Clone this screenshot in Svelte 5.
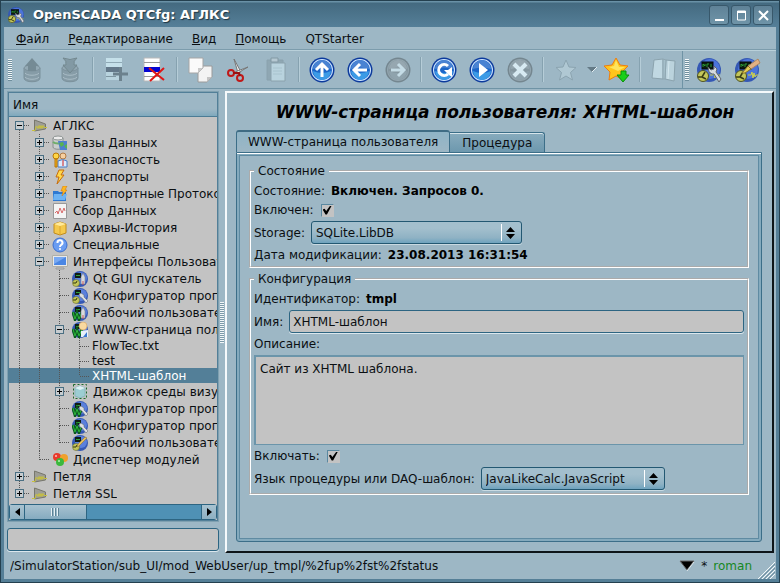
<script lang="ts">
	/**
	 * OpenSCADA configurator window -- station tree on the left,
	 * property page of the selected node on the right.
	 */

	interface TreeNode {
		depth: number;
		label: string;
		icon?: string;
		open?: boolean;
	}

	let nodes: TreeNode[] = $state([
		{ depth: 0, label: 'АГЛКС', icon: 'station', open: true },
		{ depth: 1, label: 'Базы Данных', icon: 'db', open: false },
		{ depth: 1, label: 'Безопасность', icon: 'security', open: false },
		{ depth: 1, label: 'Транспорты', icon: 'bolt', open: false },
		{ depth: 1, label: 'Транспортные Протоколы', icon: 'protocol', open: false },
		{ depth: 1, label: 'Сбор Данных', icon: 'daq', open: false },
		{ depth: 1, label: 'Архивы-История', icon: 'archive', open: false },
		{ depth: 1, label: 'Специальные', icon: 'special', open: false },
		{ depth: 1, label: 'Интерфейсы Пользователя', icon: 'ui', open: true },
		{ depth: 2, label: 'Qt GUI пускатель', icon: 'starter' },
		{ depth: 2, label: 'Конфигуратор программы', icon: 'qtcfg' },
		{ depth: 2, label: 'Рабочий пользователя', icon: 'webvision' },
		{ depth: 2, label: 'WWW-страница польз.', icon: 'webuser', open: true },
		{ depth: 3, label: 'FlowTec.txt' },
		{ depth: 3, label: 'test' },
		{ depth: 3, label: 'XHTML-шаблон' },
		{ depth: 2, label: 'Движок среды визуал.', icon: 'engine', open: false },
		{ depth: 2, label: 'Конфигуратор программы', icon: 'webcfg' },
		{ depth: 2, label: 'Конфигуратор программы', icon: 'webcfg' },
		{ depth: 2, label: 'Рабочий пользователя', icon: 'vision' },
		{ depth: 1, label: 'Диспетчер модулей', icon: 'modules' },
		{ depth: 0, label: 'Петля', icon: 'station', open: false },
		{ depth: 0, label: 'Петля SSL', icon: 'station', open: false }
	]);

	const menus = [
		['Ф', 'айл'],
		['Р', 'едактирование'],
		['В', 'ид'],
		['П', 'омощь'],
		['', 'QTStarter']
	];

	const tools = [
		{ icon: 'load', title: 'Загрузить', off: true },
		{ icon: 'save', title: 'Сохранить', off: true },
		{ icon: '|' },
		{ icon: 'add', title: 'Добавить', off: true },
		{ icon: 'del', title: 'Удалить' },
		{ icon: '|' },
		{ icon: 'copy', title: 'Копировать' },
		{ icon: 'cut', title: 'Вырезать' },
		{ icon: 'paste', title: 'Вставить', off: true },
		{ icon: '|' },
		{ icon: 'up', title: 'Вверх' },
		{ icon: 'back', title: 'Назад' },
		{ icon: 'forward', title: 'Вперёд', off: true },
		{ icon: '|' },
		{ icon: 'reload', title: 'Обновить' },
		{ icon: 'play', title: 'Запустить' },
		{ icon: 'stop', title: 'Остановить', off: true },
		{ icon: '|' },
		{ icon: 'star', title: 'Избранное', off: true },
		{ icon: 'drop', title: 'Список избранного', off: true },
		{ icon: 'staradd', title: 'Добавить в избранное' },
		{ icon: '|' },
		{ icon: 'book', title: 'Руководство', off: true }
	];

	let selected = $state(15);
	let enabled = $state(true);
	let toEnable = $state(true);
	let name = $state('XHTML-шаблон');
	let description = $state('Сайт из XHTML шаблона.');

	// is there one more sibling at this depth below row i
	function continues(i: number, depth: number): boolean {
		for (let j = i + 1; j < nodes.length; j++) {
			if (nodes[j].depth < depth) return false;
			if (nodes[j].depth === depth) return true;
		}
		return false;
	}

	let rows = $derived.by(() => {
		const res: { node: TreeNode; guides: boolean[]; index: number }[] = [];
		let hidden = Infinity;
		nodes.forEach((node, index) => {
			if (node.depth > hidden) return;
			hidden = node.open === false ? node.depth : Infinity;
			const guides: boolean[] = [];
			for (let d = 0; d <= node.depth; d++) guides.push(continues(index, d));
			res.push({ node, guides, index });
		});
		return res;
	});
</script>

{#snippet globe()}
	<circle cx="12" cy="12" r="12" fill="#3558b4" />
	<circle cx="13" cy="11" r="10" fill="#4c74da" />
	<path d="M13 17h3l1-3 1 6 1-5 1 4 1-2h2" stroke="#d0d24a" fill="none" />
	<circle cx="6" cy="18" r="5.500" fill="#c3c65a" stroke="#4d5222" />
	<path d="M1 19h4l3-5M5 19l4 2" stroke="#3a3d14" stroke-width="1.500" fill="none" />
{/snippet}

{#snippet screen()}
	<rect x="5" y="4" width="11" height="7" fill="#0c1c10" stroke="#05080a" />
	<path d="M6 9V6l2 2V6M10 9V6h2M14 6v3" stroke="#2b9a36" fill="none" />
{/snippet}

{#snippet wrench()}
	<path d="M11 9l1 5 3 2 2 0 5 8 2-3-5-7 1-3-3-3v3l-3 1z" fill="#d6dade" stroke="#60666e" />
{/snippet}

{#snippet brush()}
	<path d="M23 1l2 4-9 6-3-3z" fill="#e3b184" stroke="#b08660" />
	<path d="M13 8l3 3-6 4-3 0z" fill="#e3cc58" stroke="#8a7426" />
{/snippet}

{#snippet ball(off: boolean)}
	<circle cx="12" cy="12" r="12.500" fill={off ? '#74868f' : '#0c3a9c'} />
	<circle cx="12" cy="12" r="11" fill={off ? '#93a6b0' : '#cfe6ff'} />
	<circle cx="12" cy="12" r="10" fill={off ? '#84969f' : '#1c66c8'} />
	<path d="M3 13a9 9 0 0 0 18 0q-9 4-18 0z" fill={off ? '#8fa3ad' : '#3c9be6'} />
	<path d="M3 11a9 9 0 0 1 18 0q-9-3-18 0z" fill={off ? '#96a7b0' : '#4a83d2'} />
{/snippet}

{#snippet toolIcon(icon: string)}
	<svg width="24" height="24" viewBox="0 0 24 24" overflow="visible" aria-hidden="true">
		{#if icon === 'load' || icon === 'save'}
			<path d="M4 10v10c0 5 16 5 16 0V10z" fill="#869ca7" stroke="#7b919c" />
			<ellipse cx="12" cy="10" rx="8" ry="3" fill="#93a9b4" stroke="#7d929d" />
			<path d="M5 15c2 3 12 3 14 0M5 19c2 3 12 3 14 0" stroke="#a9bcc6" fill="none" />
			{#if icon === 'load'}
				<path d="M12 0l7 8h-3v5H8V8H5z" fill="#758b95" />
			{:else}
				<path d="M5 0q4 3 3 7H5l7 8 7-8h-3q-1-4 3-7-7 3-14 0z" fill="#8299a4" stroke="#73888f" />
			{/if}
		{:else if icon === 'add'}
			<path d="M2 0h16v10H2z" fill="#c5e0ea" />
			<path d="M2 4.500h16" stroke="#8fa9b5" />
			<path d="M2 9h16v5H2z" fill="#64798a" />
			<path d="M2 14h16v8H2z" fill="#b8d3de" />
			<path d="M2 18.500h10" stroke="#7f97a2" />
			<path d="M16.500 9v14M9 16h15" stroke="#6c818d" stroke-width="3" />
		{:else if icon === 'del'}
			<path d="M2 0h16v23H2z" fill="#fff" stroke="#b8b8b8" />
			<path d="M2 4.500h16M2 18.500h16" stroke="#999" />
			<path d="M2 9h16v5H2z" fill="#0505d2" />
			<path d="M7 10l15 12M22 10L8 23" stroke="#e01515" stroke-width="2" />
		{:else if icon === 'copy'}
			<path d="M10 8h14v11l-5 5h-9z" fill="#f3f3f3" stroke="#9a9a9a" />
			<path d="M19 24v-5h5z" fill="#c4c4c4" />
			<path d="M1 0h14v10l-5 5H1z" fill="#fafafa" stroke="#a5a5a5" />
			<path d="M10 15v-5h5z" fill="#c9c9c9" />
		{:else if icon === 'cut'}
			<path d="M8 1l7 13-3 1z" fill="#eee" stroke="#777" />
			<path d="M22 9L10 16l-1-2z" fill="#fff" stroke="#777" />
			<circle cx="5" cy="15" r="3" fill="none" stroke="#c01818" stroke-width="2" />
			<circle cx="14" cy="20" r="3" fill="none" stroke="#c01818" stroke-width="2" />
			<path d="M7 15l6 0 1 3" stroke="#9c1010" stroke-width="2" fill="none" />
		{:else if icon === 'paste'}
			<path d="M3 2h16v20H3z" fill="#8fa7b3" stroke="#8aa2ae" />
			<path d="M7 0h7v4H7z" fill="#b5c8d2" stroke="#8299a4" />
			<path d="M7 5h14v18H7z" fill="#b9d3de" stroke="#8ba2ad" />
			<path d="M9 10h9M9 13h9M9 16h9" stroke="#a8c3ce" />
		{:else if icon === 'up'}
			{@render ball(false)}
			<path d="M12 19V7M6 12l6-6 6 6" stroke="#fff" stroke-width="3" fill="none" />
		{:else if icon === 'back'}
			{@render ball(false)}
			<path d="M19 12H7M12 6l-6 6 6 6" stroke="#fff" stroke-width="3" fill="none" />
		{:else if icon === 'forward'}
			{@render ball(true)}
			<path d="M5 12h12M12 6l6 6-6 6" stroke="#c5dce6" stroke-width="3" fill="none" />
		{:else if icon === 'reload'}
			{@render ball(false)}
			<path d="M16 8a5.500 5.500 0 1 0 0 8" stroke="#fff" stroke-width="3" fill="none" />
			<path d="M12 12h4l4-3v10l-3-2z" fill="#fff" />
		{:else if icon === 'play'}
			{@render ball(false)}
			<path d="M9 5l9 7-9 7z" fill="#fff" />
		{:else if icon === 'stop'}
			{@render ball(true)}
			<path d="M6 6l12 12M18 6L6 18" stroke="#d7eaf2" stroke-width="4" />
		{:else if icon === 'star'}
			<path
				d="M12 2l3 7 7 .5-5.500 5 2 7.500-6.500-4-6.500 4 2-7.500L2 9.500 9 9z"
				fill="#b0c8d3" stroke="#8ba4b0" stroke-linejoin="round"
			/>
		{:else if icon === 'staradd'}
			<path
				d="M11 0l4 7 8 1-6 6 2 8-8-4-7 4 1-8-6-6 8-1z"
				fill="#ffc51c" stroke="#ed7d10" stroke-linejoin="round"
			/>
			<path d="M11 2l3 7 6 0-7 4-9-4 5-1z" fill="#ffe45e" />
			<path d="M16 13h5v4h3l-6 7-6-7h4z" fill="#19cf19" stroke="#0a8f0a" />
		{:else if icon === 'book'}
			<path d="M3 2l9-1v20l-11-1z" fill="#c0d8e2" stroke="#8ba3ae" />
			<path d="M15 2l9 1-1 20-9-2z" fill="#bbd3dd" stroke="#8ba3ae" />
			<path d="M12 1l3 1-1 19h-2z" fill="#a5bfca" stroke="#8fa7b2" />
			<path d="M18 3l-1 18" stroke="#d5e8ef" />
		{:else if icon === 'qtcfg'}
			{@render globe()}
			{@render screen()}
			{@render wrench()}
		{:else if icon === 'vision'}
			{@render globe()}
			{@render screen()}
			{@render brush()}
		{/if}
	</svg>
{/snippet}

{#snippet treeIcon(icon: string)}
	<svg width="16" height="16" viewBox="0 0 16 16" aria-hidden="true">
		{#if icon === 'station'}
			<path d="M2.500 2l11 4v5l-11 2z" fill="#9d9d95" stroke="#77776c" />
			<path d="M0 12.500h3l1-4h1l1 2 1-3 1 3 1-3 1 3 1-3 1 2h3" stroke="#c9c23c" fill="none" />
		{:else if icon === 'db'}
			<path d="M1 3v9c0 3 10 3 10 0V3z" fill="#c9cdcc" stroke="#898f8e" />
			<ellipse cx="6" cy="3" rx="5" ry="2" fill="#ececec" stroke="#8f9594" />
			<path d="M1 7c2 2 8 2 10 0" stroke="#6fae6a" stroke-width="2" fill="none" />
			<path d="M6 6h9v9H8z" fill="#4d7fd0" />
			<path d="M7 8l4-1 1 3-3 2zM12 11l3-2v5z" fill="#57b34f" />
		{:else if icon === 'security'}
			<circle cx="11" cy="4" r="3" fill="#f5cfa0" stroke="#b07a45" />
			<path d="M6 15V9q5-3 9 0v6z" fill="#dceafc" stroke="#4a7cc4" />
			<path d="M11 8v6" stroke="#d02020" />
			<circle cx="4" cy="4" r="3" fill="#ffd648" stroke="#bb7a08" />
			<path d="M3 7h2v8H3z" fill="#f4b51e" stroke="#b97505" />
		{:else if icon === 'bolt'}
			<path d="M7 1h5L9 6h3L5 15l2-7H4z" fill="#ffd84a" stroke="#c76c0c" />
		{:else if icon === 'protocol'}
			<path d="M1 5h5l1 1h7v9H1z" fill="#2e79d2" />
			<path d="M2 8h13l-2 6H1z" fill="#6cb3f4" />
			<path d="M11 0h4l-2 4h2l-5 6 1-5H9z" fill="#ffb81e" stroke="#c9700e" stroke-width=".5" />
		{:else if icon === 'daq'}
			<path d="M1.500 .5h13v15h-13z" fill="#f4f4f4" stroke="#999" />
			<path d="M3 10l2-2 1 3 2-6 2 5 2-5 1 3" stroke="#d86a6a" fill="none" />
		{:else if icon === 'archive'}
			<path d="M2 4l6-2 6 2v9l-6 2-6-2z" fill="#f5c94c" stroke="#c18c1c" />
			<path d="M2 4l6 2 6-2-6-2z" fill="#ffe999" />
			<path d="M8 6v9" stroke="#dba42c" />
		{:else if icon === 'special'}
			<circle cx="8" cy="8" r="7" fill="#6a9df2" stroke="#3a6ed0" />
			<path d="M5.500 6a2.500 2.500 0 1 1 3.500 2q-1 .6-1 2" stroke="#fff" stroke-width="2" fill="none" />
			<circle cx="8" cy="12" r="1" fill="#fff" />
		{:else if icon === 'ui'}
			<path d="M.5 1.500h15v11H.5z" fill="#e9e9e9" stroke="#b0b0a8" />
			<path d="M2 3h12v8H2z" fill="#4a86e4" />
			<path d="M2 3h12L2 10z" fill="#78a9f2" />
			<path d="M4 14h8v1H4z" fill="#eee" stroke="#999" />
		{:else if icon === 'engine'}
			<path d="M3 4l5-2 5 2v8l-5 2-5-2z" fill="#9ccdd2" stroke="#8ab8bd" />
			<path d="M3 4l5 2 5-2-5-2z" fill="#dff2f4" />
			<rect x="1.500" y=".5" width="13" height="14" fill="none" stroke="#1c6a2c" stroke-dasharray="2 2" />
		{:else if icon === 'modules'}
			<circle cx="5" cy="5" r="4" fill="#e83a2c" />
			<circle cx="12" cy="6" r="4" fill="#f0a02c" />
			<circle cx="8" cy="10" r="4" fill="#3cb83c" />
			<circle cx="7" cy="9" r="1" fill="#b6f2b0" />
			<circle cx="4" cy="4" r="1" fill="#ffc0b8" />
		{:else}
			<circle cx="8" cy="8" r="8" fill="#3558b4" />
			<circle cx="9" cy="7" r="6" fill="#5b80dc" />
			<rect x="3" y="2" width="6" height="5" fill="#101c14" />
			<path d="M4 4.500h4" stroke="#2fa23a" />
			{#if icon.startsWith('web')}
				<path d="M1 7l2 7 2-6 2 6 3-7" stroke="#0c5a1c" stroke-width="3" fill="none" />
				<path d="M1 7l2 7 2-6 2 6 3-7" stroke="#2bb33c" fill="none" />
			{:else}
				<circle cx="4" cy="12" r="3.500" fill="#c3c65a" stroke="#565a20" stroke-width=".5" />
				<path d="M1 12h3l1-2" stroke="#33360f" fill="none" />
			{/if}
			{#if icon === 'starter' || icon === 'webvision'}
				<path d="M11 2l2 4v7h-4V6z" fill="#d8dade" stroke="#70757c" stroke-width=".5" />
				<path d="M11 10v4" stroke="#cc5c5c" />
			{:else if icon === 'webuser'}
				<circle cx="11" cy="4" r="4" fill="#f9d9a0" stroke="#d29b50" stroke-width=".5" />
				<path d="M9 15V9l7-1v7z" fill="#e8f0fa" />
				<path d="M11 15l4-5v5z" fill="#3a78d0" />
			{:else if icon === 'vision'}
				<path d="M15 3l-8 8-2 1 1-3 7-7z" fill="#e6c05c" stroke="#8b6a28" stroke-width=".5" />
			{:else}
				<path d="M7 6l1 3 2 1 4 5 2-2-4-4V7L9 5z" fill="#dcdfe2" stroke="#5c6168" stroke-width=".5" />
			{/if}
		{/if}
	</svg>
{/snippet}

<div class="window">
	<header class="titlebar">
		<svg width="16" height="16" viewBox="0 0 24 24" overflow="visible" aria-hidden="true">
			{@render globe()}
			{@render screen()}
			{@render wrench()}
		</svg>
		<h1>OpenSCADA QTCfg: АГЛКС</h1>
		<button class="wm" aria-label="Свернуть">
			<svg width="11" height="11"><path d="M1 10h9" stroke="#fff" stroke-width="2" /></svg>
		</button>
		<button class="wm" aria-label="Развернуть">
			<svg width="11" height="11">
				<path d="M1.500 1v9h8V1z" stroke="#fff" fill="none" />
				<path d="M1 2h9" stroke="#fff" stroke-width="2" />
			</svg>
		</button>
		<button class="wm" aria-label="Закрыть">
			<svg width="11" height="11"><path d="M1 1l9 9M10 1l-9 9" stroke="#fff" stroke-width="2" /></svg>
		</button>
	</header>

	<nav class="menubar">
		{#each menus as [key, rest]}
			<button>{#if key}<u>{key}</u>{/if}{rest}</button>
		{/each}
	</nav>

	<div class="toolbars">
		<div class="toolbar">
			<span class="grip"></span>
			{#each tools as tool}
				{#if tool.icon === '|'}
					<span class="sep"></span>
				{:else if tool.icon === 'drop'}
					<button class="drop" aria-label={tool.title} disabled>
						<svg width="10" height="7"><path d="M0 1h10L5 6z" fill="#647a86" /><path d="M5 6l5-5" stroke="#e5eef2" /></svg>
					</button>
				{:else}
					<button aria-label={tool.title} disabled={tool.off}>{@render toolIcon(tool.icon)}</button>
				{/if}
			{/each}
		</div>
		<div class="toolbar start-tools">
			<span class="grip"></span>
			<button aria-label="Конфигуратор">{@render toolIcon('qtcfg')}</button>
			<button aria-label="Среда визуализации">{@render toolIcon('vision')}</button>
		</div>
	</div>

	<div class="body">
		<aside class="side">
			<div class="tree-frame">
				<div class="tree-head">Имя</div>
				<ul class="tree" role="tree">
					{#each rows as { node, guides, index } (index)}
						<li
							class="row"
							class:leaf={!node.icon}
							class:selected={selected === index}
							role="treeitem"
							aria-selected={selected === index}
							aria-expanded={node.open}
						>
							{#each guides as more, d}
								<svg class="guide" aria-hidden="true">
									{#if d < node.depth}
										{#if more}<line x1="10.5" y1="0" x2="10.5" y2="100%" />{/if}
									{:else}
										{#if index > 0}<line x1="10.5" y1="0" x2="10.5" y2="50%" />{/if}
										{#if more}<line x1="10.5" y1="50%" x2="10.5" y2="100%" />{/if}
										<line x1="11" y1="8.5" x2="20" y2="8.5" />
										{#if node.open !== undefined}
											<rect x="6.5" y="4.5" width="8" height="8" />
											<path class="sign" d={node.open ? 'M8 8.500h5' : 'M8 8.500h5M10.500 6v5'} />
										{/if}
									{/if}
								</svg>
							{/each}
							<button
								class="node"
								onclick={() => (selected = index)}
								ondblclick={() => { if (node.open !== undefined) node.open = !node.open; }}
							>
								{#if node.icon}{@render treeIcon(node.icon)}{/if}
								<span>{node.label}</span>
							</button>
						</li>
					{/each}
				</ul>
				<div class="scrollbar">
					<button aria-label="Влево"><svg width="5" height="8"><path d="M5 0v8L0 4z" /></svg></button>
					<div class="track">
						<div class="thumb"><i></i><i></i><i></i></div>
					</div>
					<button aria-label="Вправо"><svg width="5" height="8"><path d="M0 0v8l5-4z" /></svg></button>
				</div>
			</div>
			<input class="filter" type="text" aria-label="Поиск" />
		</aside>

		<div class="splitter"><span></span></div>

		<main class="page">
			<h2>WWW-страница пользователя: XHTML-шаблон</h2>
			<div class="tabs" role="tablist">
				<button class="tab active" role="tab" aria-selected="true">WWW-страница пользователя</button>
				<button class="tab" role="tab" aria-selected="false">Процедура</button>
			</div>
			<div class="panel" role="tabpanel">
				<fieldset>
					<legend>Состояние</legend>
					<div class="field">Состояние: <b>Включен. Запросов 0.</b></div>
					<div class="field">
						<label for="enabled">Включен:</label>
						<input id="enabled" type="checkbox" bind:checked={enabled} />
					</div>
					<div class="field">
						<label for="storage">Storage:</label>
						<span class="combo storage">
							<select id="storage"><option>SQLite.LibDB</option></select>
							<svg width="9" height="12"><path d="M0 5h9L4.500 0zM0 7h9l-4.500 5z" /></svg>
						</span>
					</div>
					<div class="field">Дата модификации: <b>23.08.2013 16:31:54</b></div>
				</fieldset>

				<fieldset>
					<legend>Конфигурация</legend>
					<div class="field">Идентификатор: <b>tmpl</b></div>
					<div class="field">
						<label for="name">Имя:</label>
						<input id="name" type="text" bind:value={name} />
					</div>
					<div class="field"><label for="descr">Описание:</label></div>
					<textarea id="descr" bind:value={description}></textarea>
					<div class="field">
						<label for="toenable">Включать:</label>
						<input id="toenable" type="checkbox" bind:checked={toEnable} />
					</div>
					<div class="field">
						<label for="lang">Язык процедуры или DAQ-шаблон:</label>
						<span class="combo lang">
							<select id="lang"><option>JavaLikeCalc.JavaScript</option></select>
							<svg width="9" height="12"><path d="M0 5h9L4.500 0zM0 7h9l-4.500 5z" /></svg>
						</span>
					</div>
				</fieldset>
			</div>
		</main>
	</div>

	<footer class="statusbar">
		<span class="path">/SimulatorStation/sub_UI/mod_WebUser/up_tmpl/%2fup%2fst%2fstatus</span>
		<svg width="16" height="12"><path d="M1 1h14L8 10z" stroke="#666" /><path d="M8 11l7-9" stroke="#dde6ea" /></svg>
		<span>*</span>
		<span class="user">roman</span>
		<svg class="corner" width="18" height="17">
			<path d="M0 17L17 0M4 17L17 4M8 17l9-9M12 17l5-5" stroke="#f4f9fb" />
			<path d="M2 17L17 2M6 17L17 6M10 17l7-7" stroke="#6d8fa1" />
		</svg>
	</footer>
</div>

<style>
	.window {
		--bg: #9db7c5;
		--edge: #527f98;
		--dark: #2d6582;
		--base: #c3c3c3;
		box-sizing: border-box;
		min-height: 100vh;
		display: flex;
		flex-direction: column;
		background: var(--bg);
		border: 1px solid #24404f;
		box-shadow: inset 0 0 0 3px #557f97;
		padding: 0 3px 3px;
		font: 12px/16px 'DejaVu Sans', sans-serif;
		color: #0b0f12;
	}

	button,
	input,
	select,
	textarea {
		font: inherit;
		color: inherit;
		box-sizing: border-box;
		margin: 0;
	}

	button {
		border: 0;
		padding: 0;
		background: none;
	}

	svg {
		display: block;
		flex: none;
	}

	/* Title bar */
	.titlebar {
		display: flex;
		align-items: center;
		gap: 2px;
		height: 26px;
		box-sizing: border-box;
		margin: 0 -3px;
		padding: 2px 6px 0 7px;
		background: linear-gradient(#6991a6 0, #6991a6 1px, #446a80 2px, #557f98 100%);
	}

	.titlebar h1 {
		flex: 1;
		margin: 0 0 0 7px;
		font-size: 13px;
		color: #fff;
		text-shadow: 1px 1px 1px #1d3340;
	}

	.wm {
		display: grid;
		place-items: center;
		width: 20px;
		height: 20px;
		border: 1px solid #38586b;
		border-radius: 3px;
		background: linear-gradient(#5f8297, #6f94a8);
	}

	/* Menu */
	.menubar {
		display: flex;
		gap: 19px;
		height: 23px;
		padding: 2px 12px 0;
		box-sizing: border-box;
		border-bottom: 1px solid #7c9cac;
	}

	.toolbars {
		display: flex;
		height: 39px;
		box-sizing: border-box;
		border-top: 1px solid #b9d0da;
		border-bottom: 1px solid #6f93a5;
	}

	.toolbar {
		display: flex;
		align-items: center;
		padding-left: 4px;
	}

	.start-tools {
		flex: 1;
		padding-left: 2px;
		border-left: 1px solid #6f93a5;
	}

	.toolbar button {
		display: grid;
		place-items: center;
		width: 38px;
		height: 36px;
	}

	.toolbar .drop {
		width: 13px;
	}

	.grip {
		width: 4px;
		height: 22px;
		margin-right: 1px;
		background: repeating-linear-gradient(#f2f7f9 0 1px, #6f8e9d 1px 2px);
	}

	.sep {
		width: 2px;
		height: 25px;
		margin: 0 3px;
		box-sizing: border-box;
		border-left: 1px solid #86a2b0;
		border-right: 1px solid #b6cdd8;
	}

	/* Station tree */
	.body {
		flex: 1;
		display: flex;
		padding: 2px 2px 0 3px;
	}

	.side {
		width: 212px;
		flex: none;
		display: flex;
		flex-direction: column;
		gap: 6px;
		padding-bottom: 2px;
		box-sizing: border-box;
	}

	.tree-frame {
		flex: 1;
		display: flex;
		flex-direction: column;
		border: 1px solid #7fa0b0;
		box-shadow: inset 0 0 0 1px var(--edge);
		padding: 1px;
		background: var(--base);
	}

	.tree-head {
		padding: 4px 4px 3px;
		border-bottom: 1px solid #4c7c95;
		background: linear-gradient(#9db7c5 70%, #7fa9bd);
	}

	.tree {
		flex: 1;
		margin: 0;
		padding: 0;
		list-style: none;
		overflow: hidden;
	}

	.row {
		display: flex;
		height: 17px;
	}

	.row.leaf {
		height: 15px;
	}

	.row.selected {
		background: #537f98;
		color: #fff;
	}

	.guide {
		width: 20px;
		height: 100%;
		shape-rendering: crispEdges;
	}

	.guide line {
		stroke: #555;
		stroke-dasharray: 1 1;
	}

	.guide rect {
		fill: #c8cdd0;
		stroke: #4b6f82;
	}

	.guide .sign {
		stroke: #000;
	}

	.node {
		flex: 1;
		min-width: 0;
		display: flex;
		align-items: center;
		gap: 5px;
		padding-left: 3px;
		overflow: hidden;
		text-align: left;
		white-space: nowrap;
	}

	.node span {
		min-width: 0;
		overflow: hidden;
	}

	.scrollbar {
		display: flex;
		height: 16px;
		box-sizing: border-box;
		border: 1px solid var(--dark);
		border-radius: 3px;
		background: #4f91b5;
	}

	.scrollbar button {
		display: grid;
		place-items: center;
		width: 14px;
		background: linear-gradient(#a8c2d0, #8db0c2);
	}

	.track {
		flex: 1;
		border: 1px solid var(--dark);
		border-width: 0 1px;
	}

	.thumb {
		width: 35%;
		height: 100%;
		box-sizing: border-box;
		display: flex;
		align-items: center;
		justify-content: center;
		gap: 1px;
		border-right: 1px solid var(--dark);
		background: linear-gradient(#a8c2d0, #85abc0);
	}

	.thumb i {
		width: 1px;
		height: 8px;
		background: #e6f0f5;
		border-right: 1px solid #5c8296;
	}

	input[type='text'] {
		border: 1px solid var(--dark);
		border-radius: 3px;
		background: var(--base);
		box-shadow: 0 1px 0 #dbe7ed;
		height: 23px;
		padding: 0 3px;
	}

	.splitter {
		width: 6px;
		display: grid;
		place-items: center;
	}

	.splitter span {
		width: 4px;
		height: 41px;
		background: repeating-linear-gradient(#f2f7f9 0 1px, #7c9aa9 1px 2px);
	}

	/* Property page */
	.page {
		flex: 1;
		min-width: 0;
		display: flex;
		flex-direction: column;
		padding: 7px 10px 9px 9px;
		border: 2px solid;
		border-color: #f5f9fb #0e1519 #0e1519 #f5f9fb;
	}

	.page h2 {
		margin: 0 0 6px;
		padding-left: 12px;
		font-size: 17px;
		line-height: 24px;
		font-style: italic;
		text-align: center;
		color: #000;
	}

	.tabs {
		display: flex;
		align-items: flex-end;
	}

	.tab {
		height: 20px;
		padding: 0 12px;
		border: 1px solid #3c6e88;
		border-left: 0;
		border-bottom: 0;
		border-radius: 0 3px 0 0;
		box-shadow: inset 0 1px 0 #d8e5eb;
		background: linear-gradient(#88abbd, #6d98ae);
	}

	.tab.active {
		height: 22px;
		padding: 0 11px;
		border-left: 1px solid #3c6e88;
		border-top: 2px solid #3f6c84;
		border-radius: 3px 3px 0 0;
		box-shadow: none;
		background: linear-gradient(#8fb4c6, #9db7c5);
	}

	.panel {
		flex: 1;
		display: flex;
		flex-direction: column;
		gap: 3px;
		border: 1px solid #3c6e88;
		border-radius: 0 0 3px 3px;
		box-shadow: inset 0 1px 0 #fff, inset 0 0 0 2px #84aabd, inset 0 0 0 3px #5f8ba2;
		padding: 10px 12px;
	}

	fieldset {
		display: flex;
		flex-direction: column;
		gap: 3px;
		min-width: 0;
		margin: 0;
		padding: 4px 3px 3px;
		border: 2px groove #fff;
	}

	legend {
		padding: 0 4px;
	}

	.field {
		display: flex;
		align-items: center;
		gap: 6px;
	}

	.field b {
		color: #000;
	}

	.field input[type='text'] {
		flex: 1;
		min-width: 0;
	}

	input[type='checkbox'] {
		appearance: none;
		width: 13px;
		height: 13px;
		margin-left: 1px;
		border: 1px solid #5a88a0;
		border-right-color: var(--base);
		border-bottom-color: var(--base);
		background: var(--base);
	}

	input[type='checkbox']:checked::before {
		content: '';
		display: block;
		width: 9px;
		height: 9px;
		margin: 1px;
		background: #000;
		clip-path: polygon(0 45%, 22% 36%, 40% 62%, 85% 0, 100% 4%, 48% 100%, 32% 100%);
	}

	textarea {
		height: 90px;
		padding: 4px;
		border: 2px solid #6b95aa;
		border-width: 2px 1px 1px 2px;
		background: var(--base);
		resize: none;
	}

	.combo {
		display: grid;
		align-items: center;
	}

	.combo select,
	.combo svg {
		grid-area: 1 / 1;
	}

	.combo svg {
		justify-self: end;
		margin-right: 7px;
		pointer-events: none;
	}

	.storage {
		width: 211px;
	}

	.lang {
		width: 184px;
	}

	select {
		appearance: none;
		width: 100%;
		height: 23px;
		padding: 0 4px;
		border: 1px solid #235872;
		border-radius: 3px;
		box-shadow: 0 1px 0 #c9dae2;
		background:
			linear-gradient(#fff, #fff) right 19px center / 1px 17px no-repeat,
			linear-gradient(#a3bfcd 30%, #8fb2c4 75%, #6fa3be);
	}

	/* Status bar */
	.statusbar {
		display: flex;
		align-items: center;
		gap: 6px;
		height: 26px;
		padding-left: 6px;
		white-space: nowrap;
	}

	.path {
		flex: 1;
		min-width: 0;
		overflow: hidden;
	}

	.user {
		color: #16871f;
	}

	.corner {
		align-self: flex-end;
	}
</style>
